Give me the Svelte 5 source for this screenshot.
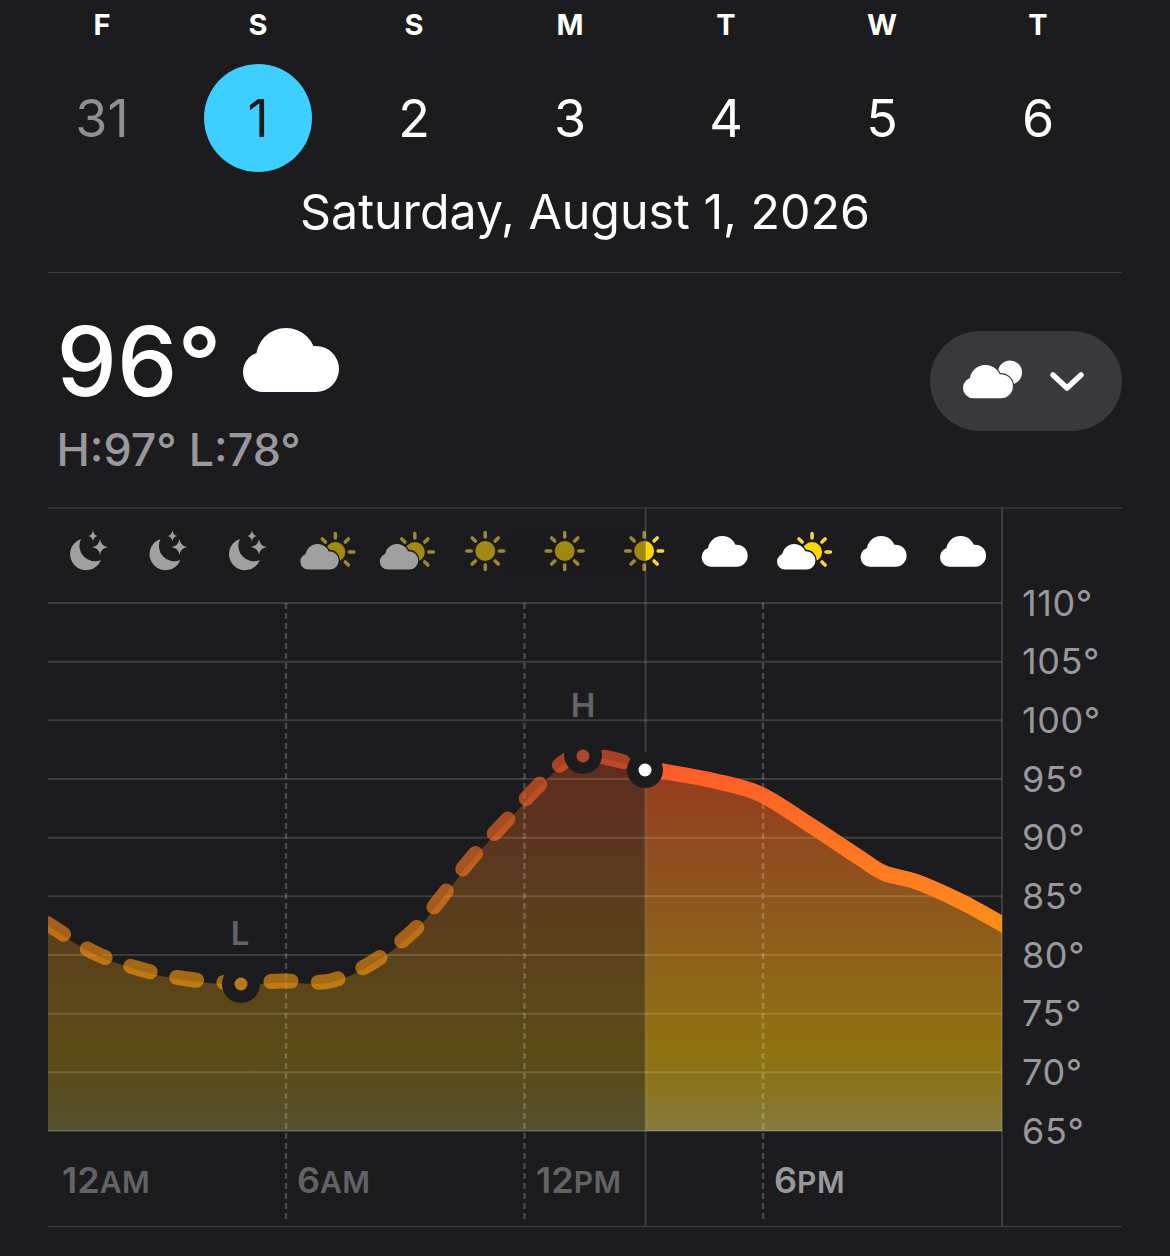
<script>
  const days = [
    { letter: 'F', date: 31, muted: true },
    { letter: 'S', date: 1, selected: true },
    { letter: 'S', date: 2 },
    { letter: 'M', date: 3 },
    { letter: 'T', date: 4 },
    { letter: 'W', date: 5 },
    { letter: 'T', date: 6 }
  ];

  const NOW_X = 645.5;
  const RIGHT = 1002;
  const BOTTOM = 1131;

  const temps = [110, 105, 100, 95, 90, 85, 80, 75, 70, 65];
  const gridY = temps.map((_, i) => 603 + i * (BOTTOM - 603) / 9);
  const hourLines = [286, 524.5, 763];

  const hourIcons = ['moon', 'moon', 'moon', 'partly', 'partly', 'sun', 'sun', 'sun', 'cloud', 'partly', 'cloud', 'cloud'];
  const iconX = hourIcons.map((_, i) => 89 + i * 79.45);

  const hours = [
    { x: 62, num: '12', unit: 'AM' },
    { x: 297, num: '6', unit: 'AM' },
    { x: 536, num: '12', unit: 'PM' },
    { x: 774, num: '6', unit: 'PM', now: true }
  ];

  const pastPts = [
    [40, 918], [48, 924], [95, 953], [140, 969], [187, 979], [240, 983], [283, 981], [330, 981],
    [373, 962], [412, 932], [437, 903], [470, 860], [505, 822], [537, 787], [565, 761], [585, 755],
    [617, 760], [NOW_X, 769]
  ];
  const futurePts = [
    [NOW_X, 769], [667, 772], [715, 781], [760, 794], [810, 825], [860, 858], [884, 873],
    [917, 882], [960, 901], [1002, 924], [1010, 929]
  ];

  // catmull-rom through the points, as cubic segments
  function smooth(pts) {
    let d = `M${pts[0][0]} ${pts[0][1]}`;
    for (let i = 0; i < pts.length - 1; i++) {
      const p0 = pts[i - 1] || pts[i];
      const p1 = pts[i];
      const p2 = pts[i + 1];
      const p3 = pts[i + 2] || p2;
      const c1 = [p1[0] + (p2[0] - p0[0]) / 6, p1[1] + (p2[1] - p0[1]) / 6];
      const c2 = [p2[0] - (p3[0] - p1[0]) / 6, p2[1] - (p3[1] - p1[1]) / 6];
      d += `C${c1[0]} ${c1[1]} ${c2[0]} ${c2[1]} ${p2[0]} ${p2[1]}`;
    }
    return d;
  }

  const pastLine = smooth(pastPts);
  const futureLine = smooth(futurePts);
  const pastArea = `${pastLine}V${BOTTOM}H40Z`;
  const futureArea = `${futureLine}V${BOTTOM}H${NOW_X}Z`;

  const cloud = 'M0 44a20 20 0 1 0 40 0a20 20 0 1 0-40 0ZM13 30a30 30 0 1 0 60 0a30 30 0 1 0-60 0ZM50 41a23 23 0 1 0 46 0a23 23 0 1 0-46 0ZM20 40V64H73V40Z';
  const rays = [0, 45, 90, 135, 180, 225, 270, 315];
</script>

<div class="page">
  <div class="week">
    {#each days as day}
      <div class="day">
        <span class="letter">{day.letter}</span>
        <span class="num" class:muted={day.muted} class:selected={day.selected}>{day.date}</span>
      </div>
    {/each}
  </div>
  <div class="date">Saturday, August 1, 2026</div>

  <div class="current">
    <div class="summary">
      <div class="now-row">
        <span class="temp">96°</span>
        <svg class="big-cloud" width="96" height="64" viewBox="0 0 96 64"><path d={cloud} fill="#fff" /></svg>
      </div>
      <div class="range">H:97° L:78°</div>
    </div>
    <div class="pill">
      <svg class="pill-icon" width="60" height="36" viewBox="0 0 60 36">
        <circle cx="47" cy="9.5" r="12" fill="#fff" />
        <g transform="translate(0 2) scale(.52)">
          <path d={cloud} fill="#fff" stroke="#39383d" stroke-width="5" paint-order="stroke" />
        </g>
      </svg>
      <svg width="38" height="20" viewBox="0 0 38 20">
        <path d="M5 4L19 17L33 4" fill="none" stroke="#fff" stroke-width="5.5" stroke-linecap="round" stroke-linejoin="round" />
      </svg>
    </div>
  </div>

  <svg class="chart" width="1170" height="749" viewBox="0 507 1170 749">
    <defs>
      <linearGradient id="areaFill" gradientUnits="userSpaceOnUse" x1="0" y1="760" x2="0" y2="1131">
        <stop offset="0" stop-color="#96391f" />
        <stop offset="0.35" stop-color="#8e541e" />
        <stop offset="0.78" stop-color="#8f7210" />
        <stop offset="0.88" stop-color="#8a741c" />
        <stop offset="1" stop-color="#847a42" />
      </linearGradient>
      <linearGradient id="lineFill" gradientUnits="userSpaceOnUse" x1="0" y1="760" x2="0" y2="985">
        <stop offset="0" stop-color="#ff5a2b" />
        <stop offset="0.7" stop-color="#ff8a1c" />
        <stop offset="1" stop-color="#ff9f0a" />
      </linearGradient>
      <clipPath id="plot"><rect x="48" y="507" width={RIGHT - 48} height="720" /></clipPath>
      <clipPath id="pastSide"><rect x="0" y="507" width={NOW_X} height="90" /></clipPath>
      <clipPath id="futureSide"><rect x={NOW_X} y="507" width="600" height="90" /></clipPath>

      <path id="hour-cloud" d={cloud} transform="translate(-23 -15) scale(.48)" />
      <g id="hour-sun" transform="translate(-1 0)">
        <circle r="10" fill="#ffd60a" />
        {#each rays as a}
          <line x1="0" y1="-14" x2="0" y2="-18.500" transform="rotate({a})" stroke="#f7d64a" stroke-width="3.500" stroke-linecap="round" />
        {/each}
      </g>
      <g id="hour-moon">
        <path d="M-6 -12A16 16 0 1 0 14 9A15.5 15.5 0 0 1 -6 -12Z" transform="translate(-2 0)" fill="#fff" />
        <path d="M11 -12Q12 -5 19 -4Q12 -3 11 4Q10 -3 3 -4Q10 -5 11 -12Z" fill="#fff" />
        <path d="M4 -21Q4.600 -15.600 9 -15Q4.600 -14.400 4 -9.500Q3.400 -14.400 -1 -15Q3.400 -15.600 4 -21Z" fill="#fff" />
      </g>
      <g id="hour-partly">
        <circle cx="8" cy="1" r="10" fill="#ffd60a" />
        {#each [-45, 0, 45, 90, 135] as a}
          <line x1="8" y1="-13" x2="8" y2="-17.500" transform="rotate({a} 8 1)" stroke="#f7d64a" stroke-width="3.500" stroke-linecap="round" />
        {/each}
        <g transform="translate(-27 -7) scale(.4)">
          <path d={cloud} fill="#fff" stroke="#1c1c1e" stroke-width="7" paint-order="stroke" />
        </g>
      </g>
      <g id="hour-icons">
        {#each hourIcons as icon, i}
          <use href="#hour-{icon}" x={iconX[i]} y="551" fill="#fff" />
        {/each}
      </g>
    </defs>

    <!-- area under the curve -->
    <g clip-path="url(#plot)">
      <path d={pastArea} fill="url(#areaFill)" opacity="0.55" />
      <path d={futureArea} fill="url(#areaFill)" />
    </g>

    <!-- grid -->
    {#each gridY as y}
      <line x1="48" x2={RIGHT} y1={y} y2={y} class="grid" />
    {/each}
    {#each hourLines as x}
      <line x1={x} x2={x} y1="603" y2="1222" class="grid dashed" />
    {/each}
    <line x1={NOW_X} x2={NOW_X} y1="507" y2="1226" class="grid" />
    <line x1={RIGHT} x2={RIGHT} y1="507" y2="1226" class="grid" />
    <line x1="48" x2="1122" y1="508" y2="508" class="rule" />
    <line x1="48" x2="1122" y1="1226.500" y2="1226.500" class="rule" />

    <!-- curve -->
    <g clip-path="url(#plot)" fill="none">
      <path d={pastLine} stroke="#1c1c1e" stroke-width="3" />
      <path d={pastLine} stroke="url(#lineFill)" stroke-width="15" stroke-linecap="round" stroke-dasharray="20 27.300" stroke-dashoffset="-9" opacity="0.6" />
      <path d={futureLine} stroke="url(#lineFill)" stroke-width="15.500" />
    </g>

    <!-- markers -->
    <text x="240" y="945" class="extreme">L</text>
    <circle cx="241" cy="984" r="19" fill="#1c1c1e" />
    <circle cx="241" cy="984" r="6.500" fill="#b57a1c" />
    <text x="583" y="717" class="extreme">H</text>
    <circle cx="583" cy="755" r="19" fill="#1c1c1e" />
    <circle cx="583" cy="756" r="6.500" fill="#a9482a" />
    <circle cx={NOW_X - 0.5} cy="770" r="18" fill="#1c1c1e" />
    <circle cx={NOW_X - 0.5} cy="770" r="6.500" fill="#fff" />

    <!-- hourly conditions, dimmed before the current time -->
    <g clip-path="url(#pastSide)" opacity="0.58"><use href="#hour-icons" /></g>
    <g clip-path="url(#futureSide)"><use href="#hour-icons" /></g>

    <!-- axis labels -->
    {#each temps as t, i}
      <text x="1022" y={gridY[i] + 12.5} class="tick">{t}°</text>
    {/each}
    {#each hours as h}
      <text x={h.x} y="1192.500" class="hour" class:now={h.now}>{h.num}<tspan class="unit">{h.unit}</tspan></text>
    {/each}
  </svg>
</div>

<style>
  :global(body) {
    background: #1c1c1e;
  }

  .page {
    height: 1256px;
    overflow: hidden;
    background: #1c1c1e;
    color: #fff;
    font-family: Inter, 'Liberation Sans', sans-serif;
  }

  .week {
    display: grid;
    grid-template-columns: repeat(7, 156px);
    padding-left: 24px;
  }

  .day {
    display: flex;
    flex-direction: column;
    align-items: center;
    gap: 14px;
  }

  .letter {
    height: 50px;
    line-height: 50px;
    font-size: 29px;
    font-weight: 700;
  }

  .num {
    width: 108px;
    height: 108px;
    line-height: 110px;
    border-radius: 50%;
    text-align: center;
    font-size: 52px;
    font-weight: 400;
  }

  .num.muted {
    color: #8e8e93;
  }

  .num.selected {
    background: #3ccfff;
    color: #1c1c1e;
  }

  .date {
    margin: 10px 48px 0;
    padding-bottom: 30px;
    height: 60px;
    line-height: 60px;
    box-sizing: content-box;
    text-align: center;
    font-size: 48.300px;
    font-weight: 400;
    border-bottom: 1.500px solid #3a3a3c;
  }

  .current {
    display: flex;
    justify-content: space-between;
    align-items: flex-start;
    height: 234px;
    margin: 0 48px;
  }

  .summary {
    padding: 38px 0 0 8.500px;
  }

  .now-row {
    display: flex;
    align-items: center;
    gap: 22px;
    height: 100px;
  }

  .temp {
    font-size: 96px;
    line-height: 100px;
    font-weight: 500;
  }

  .big-cloud {
    margin-top: -2px;
  }

  .range {
    margin-top: 14px;
    line-height: 50px;
    font-size: 44.800px;
    font-weight: 500;
    color: #98989d;
  }

  .pill {
    display: flex;
    align-items: center;
    gap: 25px;
    box-sizing: border-box;
    width: 192px;
    height: 100px;
    margin-top: 58px;
    padding-left: 33px;
    border-radius: 50px;
    background: #39383d;
  }

  .pill-icon {
    overflow: visible;
  }

  .chart {
    display: block;
  }

  .grid {
    stroke: rgba(255, 255, 255, 0.15);
    stroke-width: 2;
  }

  .dashed {
    stroke-dasharray: 6 4;
    stroke-width: 2.500;
    stroke: rgba(255, 255, 255, 0.2);
  }

  .rule {
    stroke: #3a3a3c;
    stroke-width: 1.500;
  }

  .tick {
    font-size: 36px;
    letter-spacing: 0.6px;
    fill: #98989d;
  }

  .extreme {
    font-size: 33px;
    font-weight: 600;
    fill: #636366;
    text-anchor: middle;
  }

  .hour {
    font-size: 36px;
    font-weight: 600;
    fill: #636366;
  }

  .hour.now {
    fill: #98989d;
  }

  .unit {
    font-size: 30px;
    letter-spacing: 0.5px;
  }
</style>
